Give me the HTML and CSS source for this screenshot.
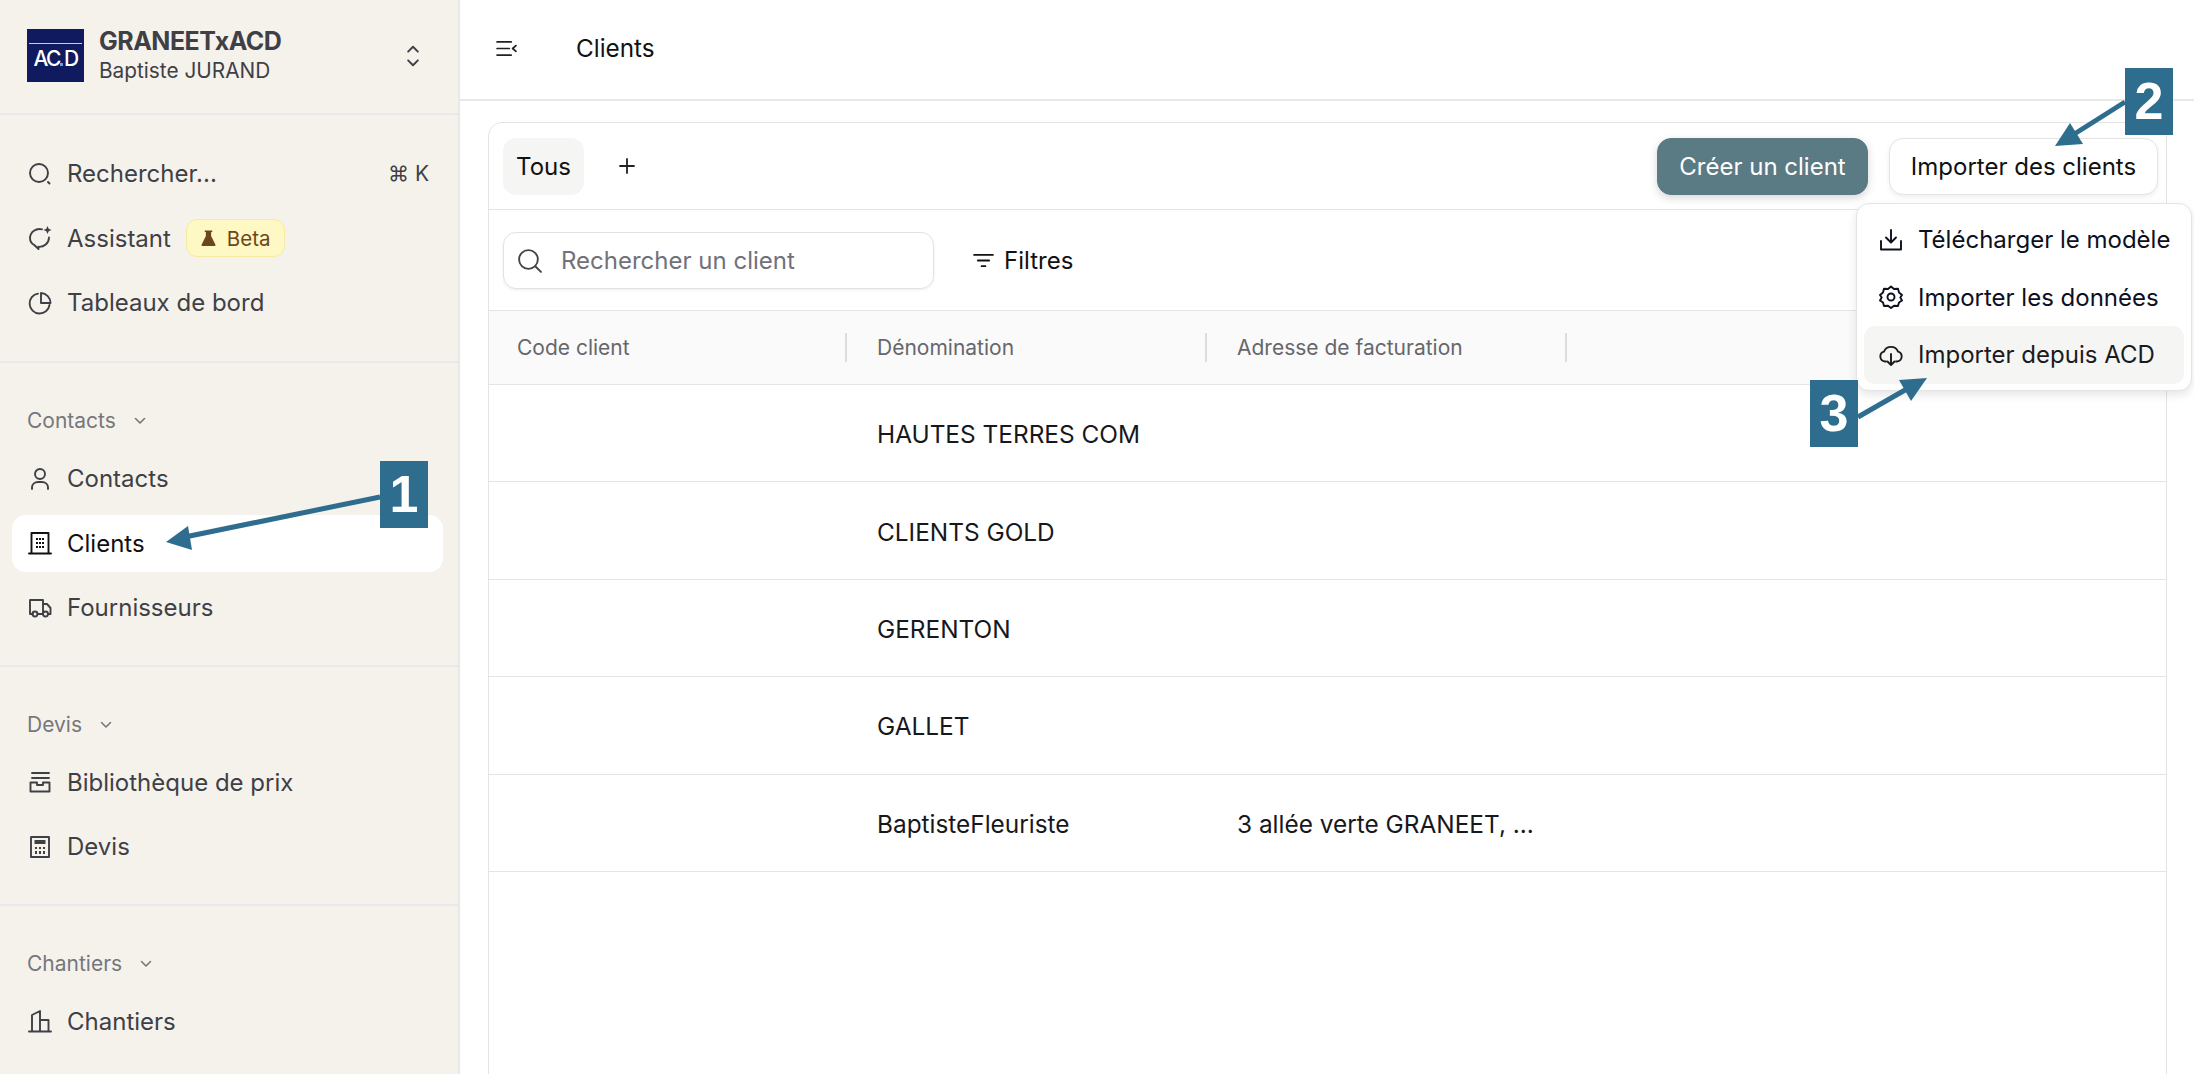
FILE: index.html
```html
<!DOCTYPE html>
<html lang="fr">
<head>
<meta charset="utf-8">
<title>Clients</title>
<link rel="stylesheet" href="styles.css">
</head>
<body>
<div class="app">
  <aside class="sidebar">
    <header class="org">
      <div class="logo">
        <span class="logo-line"></span>
        <span class="logo-text">AC<i class="logo-dot"></i>D</span>
      </div>
      <div class="org-text">
        <div class="org-name">GRANEETxACD</div>
        <div class="org-user">Baptiste JURAND</div>
      </div>
      <svg class="org-switch" viewBox="0 0 24 24"><path d="M7.500 8 12 3.500 16.500 8M7.500 16 12 20.500 16.500 16"/></svg>
    </header>

    <nav class="section">
      <div class="row">
        <svg class="icon" viewBox="0 0 24 24"><circle cx="11" cy="11" r="9"/><path d="M20 20l1.500 1.500"/></svg>
        <span>Rechercher...</span>
        <span class="kbd">⌘ K</span>
      </div>
      <div class="row">
        <svg class="icon" viewBox="0 0 24 24"><path d="M14 3.300A9.500 9.500 0 0 0 2 12c0 3.200 1.800 5.800 4.500 7.200L10.500 23V20.800c5.500.4 10.300-3.300 10.500-9.300"/><path class="solid" d="M19.500 0l1.200 2.800L23.500 4l-2.800 1.200L19.500 8l-1.200-2.800L15.500 4l2.800-1.200z"/></svg>
        <span>Assistant</span>
        <span class="beta">
          <svg class="flask" viewBox="0 0 16 18"><path d="M4 1h8v1.600h-1.200v4.200L15.400 16.200a1 1 0 0 1-.9 1.300H1.500a1 1 0 0 1-.9-1.300L5.200 6.800V2.600H4z"/></svg>
          Beta
        </span>
      </div>
      <div class="row">
        <svg class="icon" viewBox="0 0 24 24"><path d="M21.500 14A10 10 0 1 1 10 2.600"/><path d="M13 2v10h9.500A10 10 0 0 0 13 2z"/></svg>
        <span>Tableaux de bord</span>
      </div>
    </nav>

    <nav class="section grouped">
      <div class="label">Contacts <svg class="chev" viewBox="0 0 12 12"><path d="M1.500 3.500 6 8l4.500-4.500"/></svg></div>
      <div class="row">
        <svg class="icon" viewBox="0 0 24 24"><circle cx="12" cy="7" r="5"/><path d="M4 22v-1.500C4 17 7 15 10 15h4c3 0 6 2 6 5.500V22"/></svg>
        <span>Contacts</span>
      </div>
      <div class="row active">
        <svg class="icon" viewBox="0 0 24 24"><path d="M1 22.500h22M3.500 22.500V2h17v20.500"/><path class="dots" d="M8 7h2v2H8zM11 7h2v2h-2zM14 7h2v2h-2zM8 11h2v2H8zM11 11h2v2h-2zM14 11h2v2h-2zM8 15h2v2H8zM11 15h2v2h-2zM14 15h2v2h-2z"/></svg>
        <span>Clients</span>
      </div>
      <div class="row">
        <svg class="icon" viewBox="0 0 24 24"><path d="M5 18H2V4h13v14H9.500M15 8h4l3.500 4v6h-2"/><circle cx="7" cy="18" r="2.500"/><circle cx="17.500" cy="18" r="2.500"/></svg>
        <span>Fournisseurs</span>
      </div>
    </nav>

    <nav class="section grouped">
      <div class="label">Devis <svg class="chev" viewBox="0 0 12 12"><path d="M1.500 3.500 6 8l4.500-4.500"/></svg></div>
      <div class="row">
        <svg class="icon" viewBox="0 0 24 24"><path d="M4 3h17M4 8h17M2.500 12.500v9h19v-9h-6.500v2.500H9v-2.500z"/></svg>
        <span>Bibliothèque de prix</span>
      </div>
      <div class="row">
        <svg class="icon" viewBox="0 0 24 24"><rect x="3" y="2" width="18" height="20"/><path class="dots" d="M6.500 5h11v4h-11zM7 12h2v2H7zM11 12h2v2h-2zM15 12h2v2h-2zM7 16h2v3H7zM11 16h2v3h-2zM15 16h2v3h-2z"/></svg>
        <span>Devis</span>
      </div>
    </nav>

    <nav class="section grouped last">
      <div class="label">Chantiers <svg class="chev" viewBox="0 0 12 12"><path d="M1.500 3.500 6 8l4.500-4.500"/></svg></div>
      <div class="row">
        <svg class="icon" viewBox="0 0 24 24"><path d="M1 22.500h22M4 22.500V6l8-4v20.500M12 11h8.500v11.500"/></svg>
        <span>Chantiers</span>
      </div>
    </nav>
  </aside>

  <main class="main">
    <header class="topbar">
      <svg class="menu-icon" viewBox="0 0 22 18"><path d="M1 2h15M1 9h13M1 16h15M21 6l-3.500 3 3.500 3"/></svg>
      <h1 class="title">Clients</h1>
    </header>
    <div class="content">
      <section class="card">
        <div class="tabs">
          <button class="tab">Tous</button>
          <svg class="plus" viewBox="0 0 16 16"><path d="M8 1v14M1 8h14"/></svg>
          <div class="actions">
            <button class="btn primary">Créer un client</button>
            <button class="btn">Importer des clients</button>
          </div>
        </div>
        <div class="filters">
          <div class="search">
            <svg class="search-icon" viewBox="0 0 24 24"><circle cx="11" cy="11" r="9"/><path d="M17.500 17.500 23 23"/></svg>
            <span>Rechercher un client</span>
          </div>
          <div class="filter">
            <svg class="filter-icon" viewBox="0 0 22 16"><path d="M1 2h20M5 8h12M9 14h4"/></svg>
            Filtres
          </div>
        </div>
        <div class="thead">
          <div class="th"><span>Code client</span><i class="sep"></i></div>
          <div class="th"><span>Dénomination</span><i class="sep"></i></div>
          <div class="th"><span>Adresse de facturation</span><i class="sep"></i></div>
          <div class="th"></div>
        </div>
        <div class="tr"><div class="td"></div><div class="td">HAUTES TERRES COM</div><div class="td"></div><div class="td"></div></div>
        <div class="tr"><div class="td"></div><div class="td">CLIENTS GOLD</div><div class="td"></div><div class="td"></div></div>
        <div class="tr"><div class="td"></div><div class="td">GERENTON</div><div class="td"></div><div class="td"></div></div>
        <div class="tr"><div class="td"></div><div class="td">GALLET</div><div class="td"></div><div class="td"></div></div>
        <div class="tr"><div class="td"></div><div class="td">BaptisteFleuriste</div><div class="td">3 allée verte GRANEET, ...</div><div class="td"></div></div>
      </section>
    </div>
  </main>
</div>

<div class="dropdown">
  <div class="item">
    <svg class="item-icon" viewBox="0 0 24 24"><path d="M12 2v12M7 9.500l5 5 5-5"/><path d="M2 13v8.500h20V13"/></svg>
    Télécharger le modèle
  </div>
  <div class="item">
    <svg class="item-icon" viewBox="0 0 24 24"><path d="M12 1.500l3 2.500 4-.3 1 3.800 3 2.500-1.700 2.500 1.700 3-3 2-1 3.500-4-.3-3 2.300-3-2.300-4 .3-1-3.500-3-2 1.700-3L1 10l3-2.500 1-3.800 4 .3z"/><circle cx="12" cy="12" r="3.500"/></svg>
    Importer les données
  </div>
  <div class="item hover">
    <svg class="item-icon" viewBox="0 0 24 24"><path d="M7 18.500H6a5 5 0 0 1-1-9.800 7.500 7.500 0 0 1 14 0 5 5 0 0 1-1 9.800h-1"/><path d="M12 11v11M8.500 18.500 12 22l3.500-3.500"/></svg>
    Importer depuis ACD
  </div>
</div>

<svg class="arrows" viewBox="0 0 2194 1074">
  <path class="shaft" d="M380 497 180 538"/>
  <path class="head" d="M166 542 188 526 192 550z"/>
  <path class="shaft" d="M2125 102 2068 138"/>
  <path class="head" d="M2055 146 2070 123 2083 144z"/>
  <path class="shaft" d="M1858 417 1912 386"/>
  <path class="head" d="M1927 378 1899 380 1911 401z"/>
</svg>
<div class="mark mark-1">1</div>
<div class="mark mark-2">2</div>
<div class="mark mark-3">3</div>
</body>
</html>
```
FILE: styles.css
```css
* { box-sizing: border-box; }
html, body { margin: 0; height: 100%; overflow: hidden; }
body { font-family: Inter, "Liberation Sans", sans-serif; font-size: 24px; color: #111; background: #fff; position: relative; }
svg { fill: none; stroke: currentColor; stroke-width: 2; stroke-linecap: round; stroke-linejoin: round; flex: none; }

.app { display: flex; height: 1074px; }

.sidebar { width: 460px; flex: none; background: #f5f2ec; border-right: 2px solid #e9e8e6; color: #3f4046; overflow: hidden; }

.org { height: 115px; display: flex; align-items: center; padding: 0 27px 2px; border-bottom: 2px solid #e9e8ea; gap: 15px; }
.logo { width: 57px; height: 53px; background: #101a5e; display: flex; flex-direction: column; align-items: center; flex: none; padding-top: 14px; }
.logo-line { width: 53px; height: 1px; background: #c8cce6; }
.logo-text { position: relative; color: #fff; font-size: 21px; font-weight: 500; letter-spacing: -1.500px; line-height: 24px; margin-top: 3px; }
.logo-dot { display: inline-block; width: 3px; height: 3px; margin: 0 1px 0 0; background: #5aa9e6; }
.org-text { flex: 1; min-width: 0; }
.org-name { font-size: 25px; font-weight: 700; letter-spacing: -.5px; line-height: 30px; }
.org-user { font-size: 20.800px; line-height: 30px; }
.org-switch { width: 26px; height: 26px; margin-right: 5px; stroke-width: 1.800; }

.section { padding: 30px 15px 30px 12px; border-bottom: 2px solid #e9e8ea; display: flex; flex-direction: column; gap: 7.500px; }
.section.grouped { padding-bottom: 28.500px; }
.section.last { border-bottom: 0; }
.label { height: 28px; margin: 14px 0 7.500px 15px; font-size: 21px; line-height: 28px; color: #76777b; display: flex; align-items: center; gap: 18px; }
.chev { width: 12px; height: 12px; stroke-width: 1.600; }

.row { height: 57px; display: flex; align-items: center; gap: 15px; padding: 0 14px 0 16px; border-radius: 14px; }
.row.active { background: #fff; color: #111; }
.icon { width: 24px; height: 24px; stroke-width: 1.900; }
.icon .solid { fill: currentColor; stroke: none; }
.icon .dots { fill: currentColor; stroke: none; }
.kbd { margin-left: auto; font-size: 21px; }
.beta { display: flex; align-items: center; gap: 11px; height: 38px; width: 99px; padding-left: 14px; background: #fdf8c4; border: 1px solid #f8eba0; border-radius: 11px; color: #6c461d; font-size: 20.500px; }
.flask { width: 15px; height: 18px; fill: #6c461d; stroke: none; }

.main { flex: 1; min-width: 0; display: flex; flex-direction: column; }
.topbar { height: 101px; flex: none; display: flex; align-items: center; padding: 0 0 3px 36px; gap: 59px; border-bottom: 2px solid #e8e8e8; }
.menu-icon { width: 21px; height: 17px; stroke-width: 1.800; color: #222; }
.title { margin: 0; font-size: 24.300px; font-weight: 400; }

.content { flex: 1; padding: 21px 27px 0 28px; overflow: hidden; }
.card { height: 1100px; border: 1px solid #e4e4e4; border-radius: 14px 14px 0 0; }

.tabs { height: 87px; display: flex; align-items: center; padding: 0 8px 0 14px; border-bottom: 1.500px solid #e4e4e4; }
.tab { width: 81px; height: 57px; border: 0; border-radius: 13px; background: #f5f5f4; font: inherit; color: #111; padding: 0; }
.plus { width: 16px; height: 16px; margin-left: 35px; stroke-width: 1.800; color: #222; }
.actions { margin-left: auto; display: flex; gap: 21px; }
.btn { width: 269px; height: 57px; padding: 0; border: 1px solid #e4e4e4; border-radius: 14px; background: #fff; font: inherit; color: #111; box-shadow: 0 2px 5px rgba(0,0,0,.07); white-space: nowrap; }
.btn.primary { width: 211px; background: #5a7a84; color: #fff; border-color: #5a7a84; box-shadow: 0 3px 8px rgba(0,0,0,.16); }

.filters { height: 101px; display: flex; align-items: center; padding: 0 14px; gap: 39px; border-bottom: 1.500px solid #e4e4e4; }
.search { width: 431px; height: 57px; display: flex; align-items: center; gap: 19px; padding-left: 13px; border: 1px solid #e2e2e2; border-radius: 13px; color: #70717a; box-shadow: 0 1px 3px rgba(0,0,0,.07); }
.search-icon { width: 25px; height: 25px; color: #444; stroke-width: 1.800; }
.filter { display: flex; align-items: center; gap: 10px; color: #111; }
.filter-icon { width: 21px; height: 15px; stroke-width: 2; }

.thead, .tr { display: grid; grid-template-columns: 358px 360px 360px 1fr; }
.thead { height: 74px; background: #fafafa; border-bottom: 1.500px solid #e4e4e4; font-size: 21px; color: #66676c; }
.th { display: flex; align-items: center; justify-content: space-between; padding-left: 30px; }
.th:first-child { padding-left: 28px; }
.sep { width: 2px; height: 29px; background: #dcdcdc; }
.tr { height: 97.400px; border-bottom: 1.500px solid #e4e4e4; }
.td { display: flex; align-items: center; padding: 2px 0 0 30px; color: #17181c; font-size: 24.400px; }

.dropdown { position: absolute; left: 1856px; top: 203px; width: 336px; height: 188px; padding: 7px 7px 6px; display: flex; flex-direction: column; background: #fff; border: 1px solid #e4e4e4; border-radius: 13px; box-shadow: 0 4px 10px rgba(0,0,0,.1); }
.item { height: 57.500px; flex: none; display: flex; align-items: center; gap: 15px; padding-left: 15px; border-radius: 11px; color: #0e1020; white-space: nowrap; }
.item.hover { background: #f5f5f4; color: #1b1b1f; }
.item-icon { width: 24px; height: 24px; stroke-width: 1.900; }

.arrows { position: absolute; left: 0; top: 0; width: 2194px; height: 1074px; pointer-events: none; }
.shaft { stroke: #2e6d8e; stroke-width: 5; stroke-linecap: butt; }
.head { fill: #2e6d8e; stroke: none; }
.mark { position: absolute; width: 48px; height: 67px; background: #2e6d8e; color: #fff; font-family: "Liberation Sans", sans-serif; font-size: 52px; font-weight: 700; line-height: 67px; text-align: center; }
.mark-1 { left: 380px; top: 461px; }
.mark-2 { left: 2125px; top: 68px; }
.mark-3 { left: 1810px; top: 380px; }
```
